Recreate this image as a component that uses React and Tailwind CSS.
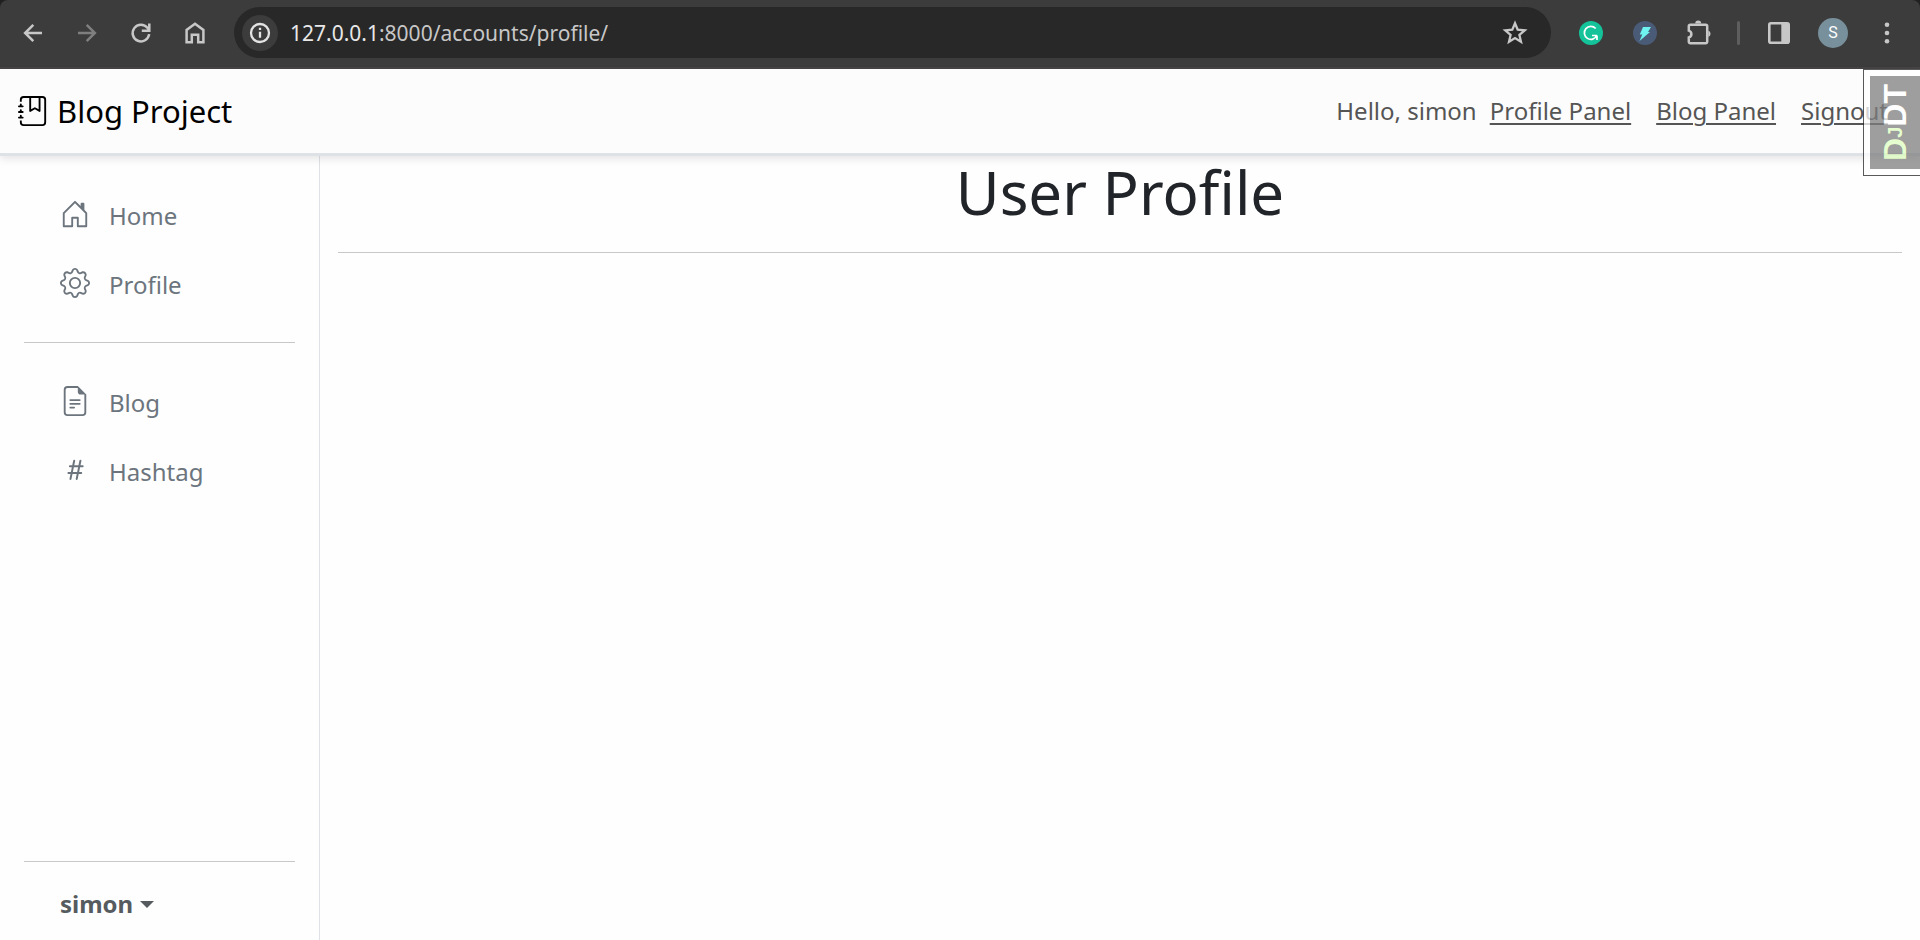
import React from "react";
import { BsJournalBookmark, BsHouseDoor, BsGear, BsFileEarmarkText, BsHash } from "react-icons/bs";

function Glyph({ children, className = "size-7", width = 2.5 }) {
  return (
    <svg viewBox="0 0 28 28" className={className} fill="none" stroke="currentColor" strokeWidth={width} aria-hidden="true">
      {children}
    </svg>
  );
}

function ToolButton({ label, children, className = "" }) {
  return (
    <button type="button" aria-label={label} className={`flex size-8 shrink-0 items-center justify-center ${className}`}>
      {children}
    </button>
  );
}

function BrowserBar() {
  return (
    <div className="bg-[#202020]">
      <div className="flex h-[69px] items-center rounded-t-lg border-b-2 border-[#464445] bg-[#3c3c3c] pb-0.5 pl-[17px] pr-[17px] text-[#c7c7c7]">
        <div className="flex items-center gap-[22px]">
          <ToolButton label="Back">
            <Glyph><path d="M23 14H7M14.300 5.800L6.100 14l8.200 8.200" /></Glyph>
          </ToolButton>
          <ToolButton label="Forward" className="text-[#7f7f7f]">
            <Glyph><path d="M5 14h16M13.700 5.800l8.200 8.200-8.200 8.200" /></Glyph>
          </ToolButton>
          <ToolButton label="Reload">
            <Glyph><path d="M22.200 15.200A8.300 8.300 0 1 1 20.400 8.800L22 10.700M22.300 4.500v7.200h-7.500" /></Glyph>
          </ToolButton>
          <ToolButton label="Home page">
            <Glyph><path d="M5.600 23.200V10.900L14 4.700l8.400 6.200v12.300h-5.200v-7.400h-6.400v7.400z" /></Glyph>
          </ToolButton>
        </div>
        <div className="ml-[23px] mr-6 flex h-[51px] min-w-0 flex-1 items-center rounded-full bg-[#282828] pl-2 pr-5">
          <button type="button" aria-label="Site information" className="flex size-9 shrink-0 items-center justify-center rounded-full bg-[#3c3c3c] text-[#e3e3e3]">
            <Glyph width={2.3}>
              <circle cx="14" cy="14" r="9" />
              <path d="M14 12.800v6M14 8.800v2.300" />
            </Glyph>
          </button>
          <div className="ml-3 flex-1 truncate text-[21px] leading-7 text-[#c7c7c7]">
            <span className="text-[#e8e8e8]">127.0.0.1</span>:8000/accounts/profile/
          </div>
          <ToolButton label="Bookmark this page">
            <Glyph width={2.3}>
              <path d="M14 4.200l2.700 6.500 7 .6-5.300 4.600 1.600 6.900-6-3.700-6 3.700 1.600-6.900-5.300-4.600 7-.6z" />
            </Glyph>
          </ToolButton>
        </div>
        <div className="flex items-center gap-[22px]">
          <ToolButton label="Grammar assistant">
            <svg viewBox="0 0 24 24" className="size-6">
              <circle cx="12" cy="12" r="12" fill="#15c39a" />
              <path d="M16.700 7.500A6.500 6.500 0 1 0 17.800 14.500M13 14.500h5M18 19v-4.500" fill="none" stroke="#fff" strokeWidth="1.700" />
            </svg>
          </ToolButton>
          <ToolButton label="Lightning extension">
            <svg viewBox="0 0 24 24" className="size-6">
              <circle cx="12" cy="12" r="12" fill="#4a5b78" />
              <path d="M10 6h8l-3 5h2L6.500 20l2.800-6.500H6.800z" fill="#6ff3f0" />
            </svg>
          </ToolButton>
          <ToolButton label="Extensions">
            <Glyph>
              <path d="M5.300 5.700h15.400a1.500 1.500 0 0 1 1.500 1.500v15.600a1.500 1.500 0 0 1-1.500 1.500H5.300a1.500 1.500 0 0 1-1.500-1.500v-4.300a3.600 3.600 0 0 0 0-6.900V7.200a1.500 1.500 0 0 1 1.500-1.500z" />
              <path d="M10.200 4.600a3 3 0 0 1 6 0zM23.300 11.500a3.400 3.400 0 0 1 0 6.400z" fill="currentColor" stroke="none" />
            </Glyph>
          </ToolButton>
        </div>
        <div className="ml-[22px] mr-[23px] h-6 w-[3px] rounded-full bg-[#5e5e5e]" />
        <div className="flex items-center gap-[22px]">
          <ToolButton label="Side panel">
            <svg viewBox="0 0 22 22" className="size-[22px]">
              <rect x="1.300" y="1.300" width="19.400" height="19.400" rx="1.500" fill="none" stroke="currentColor" strokeWidth="2.600" />
              <path d="M13.300 1h7.700v20h-7.700z" fill="currentColor" />
            </svg>
          </ToolButton>
          <ToolButton label="Account">
            <span className="flex size-[30px] items-center justify-center rounded-full bg-[#78909c] font-['Roboto'] text-base text-white">S</span>
          </ToolButton>
          <ToolButton label="Menu">
            <svg viewBox="0 0 28 28" className="size-7" fill="currentColor">
              <circle cx="14" cy="5.700" r="2.300" />
              <circle cx="14" cy="14" r="2.300" />
              <circle cx="14" cy="22.300" r="2.300" />
            </svg>
          </ToolButton>
        </div>
      </div>
    </div>
  );
}

function DebugHandle() {
  return (
    <button type="button" aria-label="Show debug toolbar" className="absolute right-0 top-0 flex h-[107px] w-[57px] border border-r-0 border-[#222] bg-white p-[6px] pr-0 opacity-75">
      <span className="flex flex-1 items-center justify-center bg-[#7f7f7f] font-['Liberation_Sans'] text-[32px] font-bold leading-none text-white">
        <span className="rotate-180 [writing-mode:vertical-rl]">
          <span className="text-[#dfffc0]">D<span className="text-xl leading-none">J</span></span>DT
        </span>
      </span>
    </button>
  );
}

function Header() {
  const link = "underline decoration-2 underline-offset-[3px]";
  return (
    <header className="relative z-10 flex h-[87px] items-center justify-between border-b-[3px] border-[#dee2e6] bg-[#fcfcfc] pl-[18px] pr-8 shadow-[0_3px_8px_rgba(0,0,0,0.1)]">
      <a href="#" className="flex items-center gap-[9px] text-[31px] leading-10 text-black">
        <BsJournalBookmark className="size-[30px]" />
        Blog Project
      </a>
      <nav className="flex items-center gap-[25px] text-2xl text-[#555]">
        <span className="flex gap-[13px]">
          <span>Hello, simon</span>
          <a href="#" className={link}>Profile Panel</a>
        </span>
        <a href="#" className={link}>Blog Panel</a>
        <a href="#" className={link}>Signout</a>
      </nav>
      <DebugHandle />
    </header>
  );
}

function NavItem({ icon: Icon, children }) {
  return (
    <li>
      <a href="#" className="flex h-[69px] items-center gap-[19px] pl-9 pt-0.5 text-2xl text-[#6c757d]">
        <Icon className="mb-1 size-[30px]" />
        {children}
      </a>
    </li>
  );
}

function Sidebar() {
  return (
    <aside className="flex w-80 shrink-0 flex-col border-r border-[#dee2e6] px-6 pt-6">
      <ul>
        <NavItem icon={BsHouseDoor}>Home</NavItem>
        <NavItem icon={BsGear}>Profile</NavItem>
      </ul>
      <hr className="my-6 border-[#c6c8ca]" />
      <ul>
        <NavItem icon={BsFileEarmarkText}>Blog</NavItem>
        <NavItem icon={BsHash}>Hashtag</NavItem>
      </ul>
      <hr className="mt-auto border-[#c6c8ca]" />
      <button type="button" className="flex h-[78px] items-center gap-[7px] pl-9 pt-1.5 text-2xl font-bold text-[#555b5e]">
        simon
        <svg viewBox="0 0 14 7" className="h-[7px] w-3.5" fill="currentColor"><path d="M0 0h14L7 7z" /></svg>
      </button>
    </aside>
  );
}

export default function App() {
  return (
    <div className="flex min-h-screen flex-col bg-[#fefefe] font-['Noto_Sans',sans-serif]">
      <BrowserBar />
      <Header />
      <div className="flex flex-1">
        <Sidebar />
        <main className="flex-1 px-[18px]">
          <h1 className="text-center text-[60px] leading-[72px] text-[#212529]">User Profile</h1>
          <hr className="mt-6 border-[#c6c8ca]" />
        </main>
      </div>
    </div>
  );
}
